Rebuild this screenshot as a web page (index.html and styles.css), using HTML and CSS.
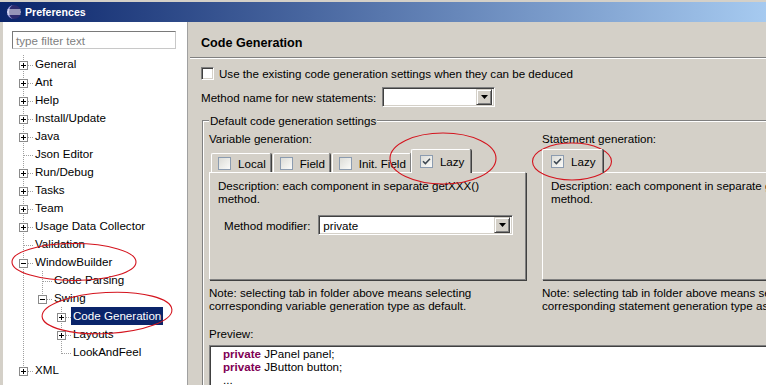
FILE: index.html
```html
<!DOCTYPE html>
<html>
<head>
<meta charset="utf-8">
<title>Preferences</title>
<link rel="stylesheet" href="styles.css">
</head>
<body>
<div class="window">
  <div class="titlebar">
    <svg class="appicon" width="16" height="16" viewBox="0 0 16 16">
      <circle cx="8" cy="8" r="7" fill="#2d2b6e"/>
      <path d="M8 1 A7 7 0 0 0 8 15 A5 7 0 0 1 8 1Z" fill="#9a9ee0"/>
      <rect x="1.5" y="5.5" width="13" height="1" fill="#fff"/>
      <rect x="1" y="7.5" width="14" height="1" fill="#fff"/>
      <rect x="1.5" y="9.5" width="13" height="1" fill="#fff"/>
    </svg>
    <span>Preferences</span>
  </div>
  <div class="main">
    <aside class="left">
      <div class="filter">type filter text</div>
      <div class="tree">
        <div class="row"><span class="c tee"><span class="box plus"></span></span><span class="lbl">General</span></div>
        <div class="row"><span class="c tee"><span class="box plus"></span></span><span class="lbl">Ant</span></div>
        <div class="row"><span class="c tee"><span class="box plus"></span></span><span class="lbl">Help</span></div>
        <div class="row"><span class="c tee"><span class="box plus"></span></span><span class="lbl">Install/Update</span></div>
        <div class="row"><span class="c tee"><span class="box plus"></span></span><span class="lbl">Java</span></div>
        <div class="row"><span class="c tee"></span><span class="lbl">Json Editor</span></div>
        <div class="row"><span class="c tee"><span class="box plus"></span></span><span class="lbl">Run/Debug</span></div>
        <div class="row"><span class="c tee"><span class="box plus"></span></span><span class="lbl">Tasks</span></div>
        <div class="row"><span class="c tee"><span class="box plus"></span></span><span class="lbl">Team</span></div>
        <div class="row"><span class="c tee"><span class="box plus"></span></span><span class="lbl">Usage Data Collector</span></div>
        <div class="row"><span class="c tee"></span><span class="lbl">Validation</span></div>
        <div class="row"><span class="c tee"><span class="box minus"></span></span><span class="lbl">WindowBuilder</span></div>
        <div class="row"><span class="c vl"></span><span class="c tee"></span><span class="lbl">Code Parsing</span></div>
        <div class="row"><span class="c vl"></span><span class="c last"><span class="box minus"></span></span><span class="lbl">Swing</span></div>
        <div class="row"><span class="c vl"></span><span class="c"></span><span class="c tee"><span class="box plus"></span></span><span class="lbl sel">Code Generation</span></div>
        <div class="row"><span class="c vl"></span><span class="c"></span><span class="c tee"><span class="box plus"></span></span><span class="lbl">Layouts</span></div>
        <div class="row"><span class="c vl"></span><span class="c"></span><span class="c last"></span><span class="lbl">LookAndFeel</span></div>
        <div class="row"><span class="c last"><span class="box plus"></span></span><span class="lbl">XML</span></div>
      </div>
    </aside>
    <section class="right">
      <div class="header">Code Generation</div>
      <div class="content">
        <div class="check-row"><span class="cb-classic"></span><span>Use the existing code generation settings when they can be deduced</span></div>
        <div class="method-row">
          <span>Method name for new statements:</span>
          <div class="combo name"><span class="val"></span><span class="btn"><svg width="7" height="4" viewBox="0 0 7 4"><path d="M0 0H7L3.5 4Z" fill="#000"/></svg></span></div>
        </div>
        <fieldset class="group">
          <legend>Default code generation settings</legend>
          <div class="cols">
            <div class="col">
              <div class="col-label">Variable generation:</div>
              <div class="tabs">
                <div class="tab"><span class="cb"></span>Local</div>
                <div class="tab"><span class="cb"></span>Field</div>
                <div class="tab"><span class="cb"></span>Init. Field</div>
                <div class="tab sel"><span class="cb"><svg width="11" height="11" viewBox="0 0 11 11"><path d="M2 5.2L4.4 7.6L9 2.8" stroke="#3c4650" stroke-width="1.5" fill="none"/></svg></span>Lazy</div>
              </div>
              <div class="panel">
                <div>Description: each component in separate getXXX() method.</div>
                <div class="mod-row">
                  <span>Method modifier:</span>
                  <div class="combo mod"><span class="val">private</span><span class="btn"><svg width="7" height="4" viewBox="0 0 7 4"><path d="M0 0H7L3.5 4Z" fill="#000"/></svg></span></div>
                </div>
              </div>
              <div class="note">Note: selecting tab in folder above means selecting corresponding variable generation type as default.</div>
            </div>
            <div class="col">
              <div class="col-label">Statement generation:</div>
              <div class="tabs">
                <div class="tab sel"><span class="cb"><svg width="11" height="11" viewBox="0 0 11 11"><path d="M2 5.2L4.4 7.6L9 2.8" stroke="#3c4650" stroke-width="1.5" fill="none"/></svg></span>Lazy</div>
              </div>
              <div class="panel">
                <div>Description: each component in separate getXXX() method.</div>
              </div>
              <div class="note">Note: selecting tab in folder above means selecting corresponding statement generation type as default.</div>
            </div>
            <div class="preview-label">Preview:</div>
            <div class="preview">
              <div><span class="kw">private</span> JPanel panel;</div>
              <div><span class="kw">private</span> JButton button;</div>
              <div>...</div>
            </div>
          </div>
        </fieldset>
      </div>
    </section>
  </div>
  <svg class="annot" width="766" height="385" viewBox="0 0 766 385">
    <g fill="none" stroke="#d4141e" stroke-width="1.1">
      <ellipse cx="74" cy="262" rx="62" ry="18.5"/>
      <ellipse cx="107" cy="313" rx="65" ry="20.5" transform="rotate(-3 107 313)"/>
      <ellipse cx="443" cy="158.5" rx="53" ry="25.5"/>
      <ellipse cx="572" cy="161.5" rx="39.5" ry="18.5"/>
    </g>
  </svg>
</div>
</body>
</html>
```

FILE: styles.css
```css
* { box-sizing: border-box; }
html, body { margin: 0; padding: 0; }
body {
  width: 766px;
  height: 385px;
  overflow: hidden;
  background: #d4d0c8;
  font-family: "Liberation Sans", Arial, sans-serif;
  font-size: 11.6px;
  color: #000;
}
.window {
  position: relative;
  width: 766px;
  height: 385px;
  overflow: hidden;
  padding-top: 2px;
}
.titlebar {
  height: 20px;
  background: linear-gradient(to right, #0a246a, #a6caf0);
  display: flex;
  align-items: center;
  gap: 3px;
  padding-left: 6px;
  color: #fff;
  font-weight: bold;
  font-size: 10.6px;
}
.appicon { display: block; }
.main {
  display: flex;
  height: 363px;
}
.left {
  width: 185px;
  margin-left: 3px;
  background: #fff;
  border-right: 1px solid #a0a0a0;
  flex-shrink: 0;
}
.filter {
  margin: 9px 0 0 9px;
  width: 164px;
  height: 18px;
  border: 1px solid;
  border-color: #7a7a7a #c8c8c8 #c8c8c8 #7a7a7a;
  color: #808080;
  padding-left: 3px;
  display: flex;
  align-items: center;
}
.tree {
  margin-top: 6px;
  padding-left: 11px;
}
.row {
  display: flex;
  height: 18px;
  align-items: center;
}
.c {
  width: 19px;
  height: 18px;
  flex-shrink: 0;
  display: flex;
  align-items: flex-start;
  background-repeat: no-repeat;
}
.c.tee {
  background-image:
    repeating-linear-gradient(to bottom, #a0a0a0 0 1px, transparent 1px 2px),
    repeating-linear-gradient(to right, #a0a0a0 0 1px, transparent 1px 2px);
  background-size: 1px 18px, 9px 1px;
  background-position: 9px 0, 10px 10px;
}
.c.last {
  background-image:
    repeating-linear-gradient(to bottom, #a0a0a0 0 1px, transparent 1px 2px),
    repeating-linear-gradient(to right, #a0a0a0 0 1px, transparent 1px 2px);
  background-size: 1px 11px, 9px 1px;
  background-position: 9px 0, 10px 10px;
}
.c.vl {
  background-image: repeating-linear-gradient(to bottom, #a0a0a0 0 1px, transparent 1px 2px);
  background-size: 1px 18px;
  background-position: 9px 0;
}
.box {
  width: 9px;
  height: 9px;
  margin: 6px 0 0 5px;
  border: 1px solid #8a8a8a;
  background-color: #fff;
  background-repeat: no-repeat;
}
.box.plus {
  background-image: linear-gradient(#000, #000), linear-gradient(#000, #000);
  background-size: 5px 1px, 1px 5px;
  background-position: 1px 3px, 3px 1px;
}
.box.minus {
  background-image: linear-gradient(#000, #000);
  background-size: 5px 1px;
  background-position: 1px 3px;
}
.lbl {
  padding: 0 2px;
  height: 18px;
  line-height: 18px;
  white-space: nowrap;
}
.lbl.sel {
  background: #0a246a;
  color: #fff;
}

.right {
  width: 700px;
  flex-shrink: 0;
  margin-left: 2px;
}
.header {
  height: 36px;
  padding: 6px 0 0 11px;
  display: flex;
  align-items: center;
  font-weight: bold;
  font-size: 12.6px;
  border-bottom: 1px solid #808080;
  box-shadow: 0 1px 0 #fff;
}
.content {
  padding-left: 11px;
}
.check-row {
  display: flex;
  align-items: center;
  gap: 5px;
  height: 16px;
  margin-top: 7px;
}
.cb-classic {
  width: 13px;
  height: 13px;
  background: #fff;
  border: 1px solid;
  border-color: #808080 #fff #fff #808080;
  box-shadow: inset 1px 1px 0 #404040, inset -1px -1px 0 #d4d0c8;
}
.method-row {
  display: flex;
  align-items: center;
  gap: 6px;
  height: 20px;
  margin-top: 6px;
}
.combo {
  display: flex;
  align-items: center;
  height: 20px;
  padding: 2px;
  background: #fff;
  border: 1px solid;
  border-color: #808080 #fff #fff #808080;
  box-shadow: inset 1px 1px 0 #404040, inset -1px -1px 0 #d4d0c8;
}
.combo.name { width: 113px; }
.combo.mod { width: 195px; }
.combo .val {
  flex: 1;
  padding-left: 2px;
}
.combo .btn {
  width: 16px;
  height: 16px;
  display: flex;
  align-items: center;
  justify-content: center;
  background: #d4d0c8;
  border: 1px solid;
  border-color: #d4d0c8 #404040 #404040 #d4d0c8;
  box-shadow: inset 1px 1px 0 #fff, inset -1px -1px 0 #808080;
}
.combo .btn svg { display: block; }

.group {
  margin: 7px 0 0 1px;
  width: 690px;
  min-width: 0;
  border: 1px solid #808080;
  box-shadow: inset 1px 1px 0 #fff;
  padding: 5px 0 0 6px;
}
.group legend {
  padding: 0 1px;
  line-height: 13px;
  background: #d4d0c8;
}
.cols {
  display: grid;
  grid-template-columns: 317px 317px;
  column-gap: 16px;
}
.col-label { line-height: 13px; }
.tabs {
  display: flex;
  align-items: flex-end;
  height: 23px;
  margin-top: 4px;
  padding-left: 2px;
}
.tab {
  height: 19px;
  display: flex;
  align-items: center;
  gap: 7px;
  padding: 0 4px 0 6px;
  margin-right: 2px;
  border-top: 1px solid #fff;
  border-left: 1px solid #fff;
  border-right: 1px solid #808080;
  box-shadow: 1px 0 0 #404040;
  border-radius: 2px 2px 0 0;
  white-space: nowrap;
}
.tab.sel {
  position: relative;
  z-index: 1;
  height: 24px;
  margin: 0 0 -1px -2px;
  padding: 0 6px 1px 8px;
  background: #d4d0c8;
}
.cb {
  width: 13px;
  height: 13px;
  flex-shrink: 0;
  border: 1px solid #8c9cb0;
  background: linear-gradient(135deg, #dcdcd7, #fbfbf9);
  display: flex;
  align-items: center;
  justify-content: center;
}
.cb svg { display: block; }
.panel {
  height: 108px;
  border: 1px solid;
  border-color: #fff #808080 #808080 #fff;
  box-shadow: 1px 1px 0 #404040;
  padding: 6px 8px 0;
  line-height: 13px;
}
.mod-row {
  display: flex;
  align-items: center;
  gap: 8px;
  margin-top: 10px;
  padding-left: 6px;
}
.note {
  margin-top: 6px;
  line-height: 13px;
}
.preview-label {
  grid-column: 1 / -1;
  margin-top: 15px;
  line-height: 13px;
}
.preview {
  grid-column: 1 / -1;
  margin-top: 5px;
  height: 60px;
  background: #fff;
  border: 1px solid;
  border-color: #808080 #fff #fff #808080;
  box-shadow: inset 1px 1px 0 #404040;
  padding: 1px 0 0 13px;
  line-height: 13px;
}
.kw {
  color: #7f0055;
  font-weight: bold;
}
.annot {
  position: absolute;
  left: 0;
  top: 0;
  pointer-events: none;
}
```
